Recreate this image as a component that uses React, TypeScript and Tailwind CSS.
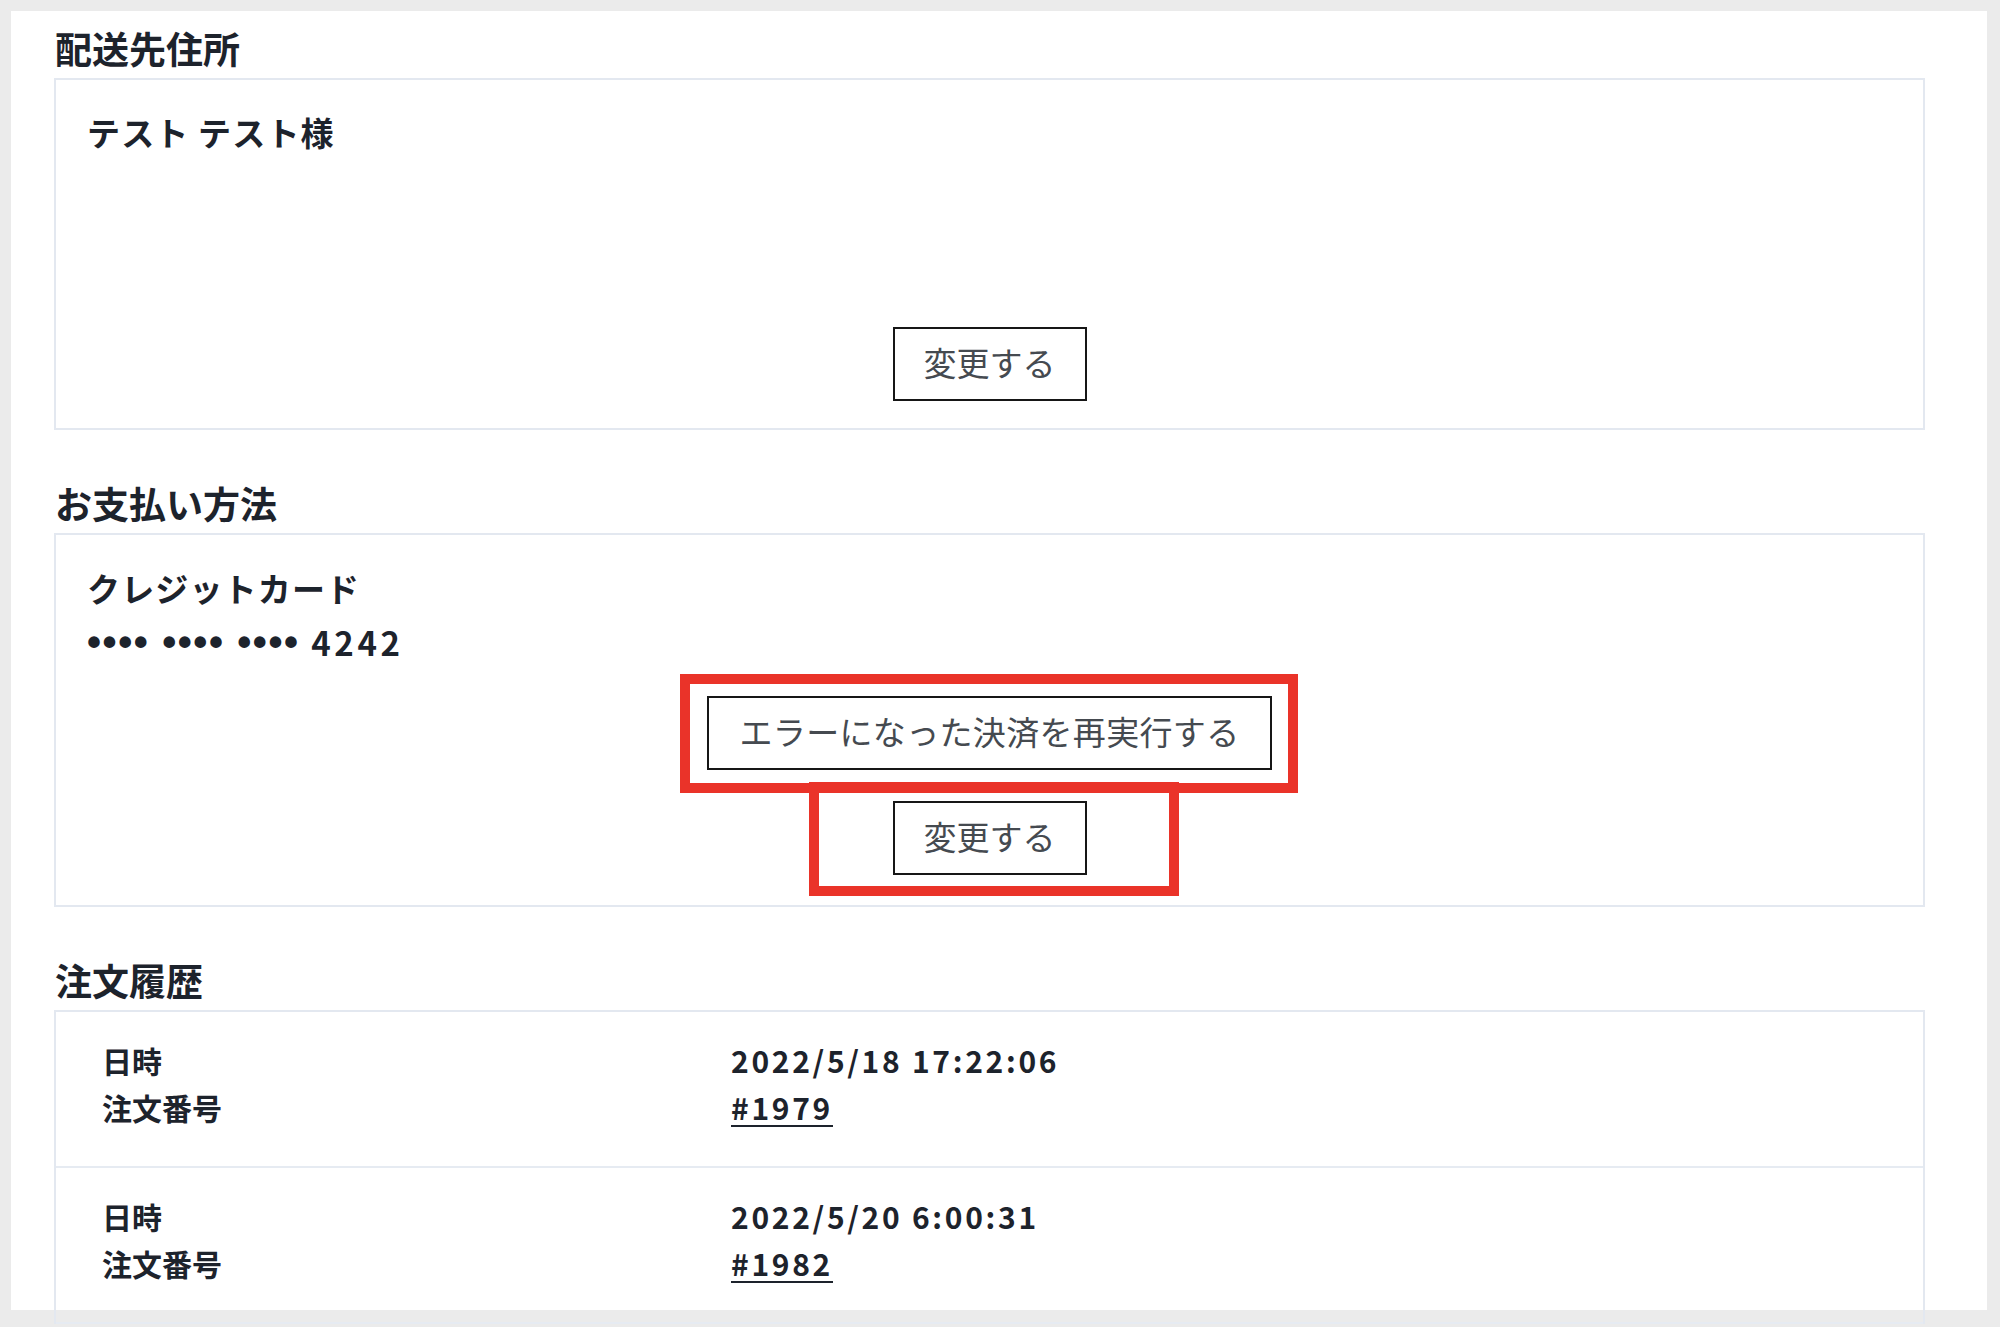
import React from "react";

function Btn({ children, wide = false }: { children: React.ReactNode; wide?: boolean }) {
  return (
    <button
      className={`border-2 border-[#161616] bg-white pt-[9px] pb-[13px] text-[33px] leading-[48px] font-normal text-[#454a50] ${
        wide ? "px-[31px] tracking-[0.01em]" : "px-[29px]"
      }`}
    >
      {children}
    </button>
  );
}

function Heading({ children, className = "" }: { children: React.ReactNode; className?: string }) {
  return (
    <h2 className={`pl-[1px] pb-[5px] text-[37px] leading-[50px] font-semibold ${className}`}>{children}</h2>
  );
}

function OrderRow({ date, no }: { date: string; no: string }) {
  return (
    <div className="grid grid-cols-[629px_1fr] border-b-2 border-[#e6ebf2] pl-[46px] pt-[25px] pb-[35px] text-[30px] leading-[47px] font-bold">
      <div>
        <div>日時</div>
        <div>注文番号</div>
      </div>
      <div className="tracking-[0.09em]">
        <div>{date}</div>
        <div>
          <span className="underline decoration-2 underline-offset-[5px]">{no}</span>
        </div>
      </div>
    </div>
  );
}

export default function App() {
  return (
    <div className="h-[1327px] overflow-hidden bg-[#ebebeb] pt-[11px] pl-[11px] font-['Noto_Sans_CJK_JP',sans-serif] text-[#1d232c]">
      <div className="h-[1299px] w-[1976px] bg-white pt-[12px] pl-[43px]">
        <div className="w-[1871px]">
          <Heading>配送先住所</Heading>
          <div className="border-2 border-[#e3e8f0] px-[31px] pt-[28px] pb-[27px]">
            <p className="text-[33px] leading-[48px] font-semibold tracking-[0.035em]">テスト テスト様</p>
            <div className="h-[171px]" />
            <div className="flex justify-center">
              <Btn>変更する</Btn>
            </div>
          </div>

          <Heading className="mt-[48px]">お支払い方法</Heading>
          <div className="border-2 border-[#e3e8f0] px-[31px] pt-[29px] pb-[30px]">
            <p className="pb-[4px] text-[33px] leading-[48px] font-semibold tracking-[0.035em]">クレジットカード</p>
            <p className="text-[33px] leading-[52px] font-bold">
              <span className="font-['Liberation_Sans',sans-serif] text-[40px] leading-[40px] tracking-[0.04em]">
                •••• •••• ••••
              </span>{" "}
              <span className="ml-[4px] tracking-[0.11em]">4242</span>
            </p>
            <div className="mt-[28px] flex flex-col items-center gap-[31px]">
              <div className="relative">
                <Btn wide>エラーになった決済を再実行する</Btn>
                <div className="pointer-events-none absolute -left-[27px] -right-[26px] -top-[22px] -bottom-[23px] border-[10px] border-[#ea3329]" />
              </div>
              <div className="relative">
                <Btn>変更する</Btn>
                <div className="pointer-events-none absolute -left-[84px] -right-[92px] -top-[19px] -bottom-[21px] border-[10px] border-[#ea3329]" />
              </div>
            </div>
          </div>

          <Heading className="mt-[48px]">注文履歴</Heading>
          <div className="border-x-2 border-t-2 border-[#e3e8f0]">
            <OrderRow date="2022/5/18 17:22:06" no="#1979" />
            <OrderRow date="2022/5/20 6:00:31" no="#1982" />
          </div>
        </div>
      </div>
    </div>
  );
}
